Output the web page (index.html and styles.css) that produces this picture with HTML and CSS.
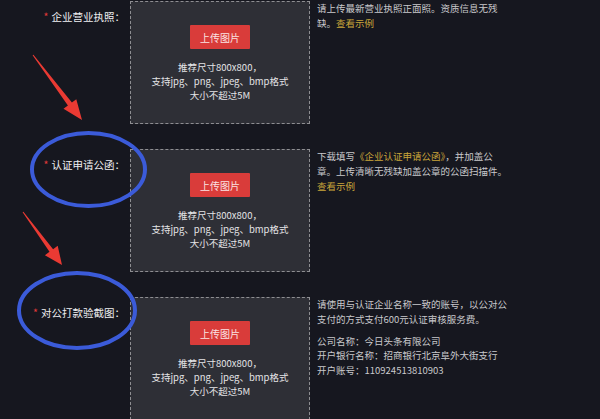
FILE: index.html
```html
<!DOCTYPE html>
<html lang="zh-CN">
<head>
<meta charset="utf-8">
<title>企业认证</title>
<link rel="stylesheet" href="styles.css">
</head>
<body>
<div class="form">
  <div class="row">
    <div class="label"><span class="req">*</span>企业营业执照：</div>
    <div class="upload">
      <button class="btn">上传图片</button>
      <div class="tips">推荐尺寸800x800，<br>支持jpg、png、jpeg、bmp格式<br>大小不超过5M</div>
    </div>
    <div class="hint">
      <p>请上传最新营业执照正面照。资质信息无残<br>缺。<span class="link">查看示例</span></p>
    </div>
  </div>
  <div class="row">
    <div class="label"><span class="req">*</span>认证申请公函：</div>
    <div class="upload">
      <button class="btn">上传图片</button>
      <div class="tips">推荐尺寸800x800，<br>支持jpg、png、jpeg、bmp格式<br>大小不超过5M</div>
    </div>
    <div class="hint">
      <p>下载填写<span class="link">《企业认证申请公函》</span>，并加盖公<br>章。上传清晰无残缺加盖公章的公函扫描件。<br><span class="link">查看示例</span></p>
    </div>
  </div>
  <div class="row">
    <div class="label"><span class="req">*</span>对公打款验截图：</div>
    <div class="upload">
      <button class="btn">上传图片</button>
      <div class="tips">推荐尺寸800x800，<br>支持jpg、png、jpeg、bmp格式<br>大小不超过5M</div>
    </div>
    <div class="hint">
      <p>请使用与认证企业名称一致的账号，以公对公<br>支付的方式支付600元认证审核服务费。</p>
      <p>公司名称：今日头条有限公司<br>开户银行名称：招商银行北京阜外大街支行<br>开户账号：110924513810903</p>
    </div>
  </div>
</div>
<svg class="marks" width="600" height="419" viewBox="0 0 600 419">
  <polygon class="arrow" points="33.4,54.7 71.9,102.5 76.3,99.2 82,120 63.5,108.8 67.9,105.5 32.6,55.3"/>
  <polygon class="arrow" points="23.4,211.7 53.1,249.2 57.7,245.8 62,265 44.9,255.2 49.5,251.8 22.6,212.3"/>
  <ellipse class="ring" cx="88.5" cy="169.5" rx="56.5" ry="36.5"/>
  <ellipse class="ring" cx="77" cy="310.5" rx="58" ry="37.5"/>
</svg>
</body>
</html>
```
FILE: styles.css
```css
html, body {
  margin: 0;
  padding: 0;
}
body {
  background: #16171f;
  font-family: "Noto Sans CJK SC", "Microsoft YaHei", sans-serif;
  position: relative;
  width: 600px;
  height: 419px;
  overflow: hidden;
}
.form {
  padding-top: 1px;
  display: flex;
  flex-direction: column;
  gap: 25px;
}
.row {
  display: grid;
  grid-template-columns: 130px 180px 1fr;
}
.label {
  text-align: right;
  padding-right: 5px;
  padding-top: 9px;
  font-size: 10.5px;
  line-height: 14px;
  color: #f0f0f2;
  white-space: nowrap;
}
.req {
  color: #e03a3a;
  margin-right: 3px;
}
.upload {
  box-sizing: border-box;
  height: 123px;
  border: 1px dashed #8e8e92;
  background: #2e2f36;
  display: flex;
  flex-direction: column;
  align-items: center;
  padding-top: 23px;
}
.btn {
  width: 60px;
  height: 24px;
  padding: 0;
  background: #d93c3a;
  color: #fbe3e3;
  font-family: inherit;
  font-size: 10px;
  border: none;
  border-radius: 1px;
}
.tips {
  margin-top: 11px;
  font-size: 9.5px;
  line-height: 14px;
  color: #e4e4e6;
  text-align: center;
  white-space: nowrap;
}
.hint {
  padding-left: 7px;
  font-size: 9.5px;
  line-height: 14.8px;
  color: #c9c9cc;
  white-space: nowrap;
}
.hint p {
  margin: 0;
}
.hint p + p {
  margin-top: 7px;
}
.link {
  color: #c9a53a;
}
.marks {
  position: absolute;
  left: 0;
  top: 0;
  pointer-events: none;
}
.arrow {
  fill: #ea3a33;
}
.ring {
  fill: none;
  stroke: #3b5bd9;
  stroke-width: 4;
}
```
